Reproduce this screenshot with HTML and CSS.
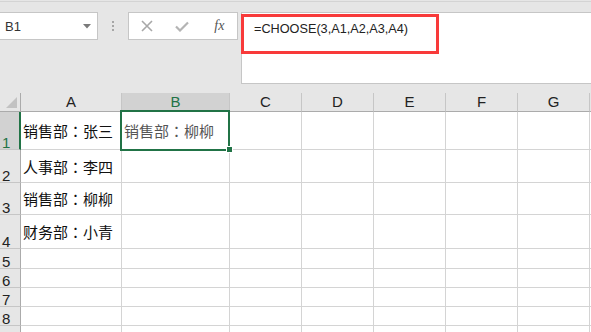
FILE: index.html
```html
<!DOCTYPE html>
<html lang="zh">
<head>
    <meta charset="UTF-8">
    <title>CHOOSE</title>
    <link rel="stylesheet" href="styles.css">
</head>
<body>

    <!-- 名称框 + 编辑栏 -->
    <div class="toolbar">
        <div class="name-box">
            <span>B1</span>
            <svg width="8" height="5" viewBox="0 0 8 5"><path d="M0 0H8L4 4.5Z" fill="#7a7a7a"/></svg>
        </div>
        <div class="grip"><i></i><i></i><i></i></div>
        <div class="fx-buttons">
            <span class="fx-btn">
                <svg width="12" height="12" viewBox="0 0 12 12"><path d="M1 1L11 11M11 1L1 11" stroke="#a8a8a8" stroke-width="1.6" fill="none"/></svg>
            </span>
            <span class="fx-btn">
                <svg width="14" height="11" viewBox="0 0 14 11"><path d="M1 5.5L5 9.5L13 1.5" stroke="#b4b4b4" stroke-width="2.2" fill="none"/></svg>
            </span>
            <span class="fx-btn fx-label">fx</span>
        </div>
        <div class="formula-bar">
            <div class="highlight"></div>
            <span class="formula">=CHOOSE(3,A1,A2,A3,A4)</span>
        </div>
    </div>

    <!-- 工作表 -->
    <div class="sheet">
        <div class="corner"><svg width="11" height="11" viewBox="0 0 11 11"><path d="M11 0V11H0Z" fill="#c2c2c2"/></svg></div>
        <div class="col-head">A</div>
        <div class="col-head active">B</div>
        <div class="col-head">C</div>
        <div class="col-head">D</div>
        <div class="col-head">E</div>
        <div class="col-head">F</div>
        <div class="col-head">G</div>
        <div class="col-head"></div>

        <div class="row-head active">1</div>
        <div class="cell">销售部<span class="colon">：</span>张三</div>
        <div class="cell selected">销售部<span class="colon">：</span>柳柳<span class="sel-box"></span><span class="fill-handle"></span></div>
        <div class="cell"></div><div class="cell"></div><div class="cell"></div><div class="cell"></div><div class="cell"></div><div class="cell"></div>

        <div class="row-head">2</div>
        <div class="cell">人事部<span class="colon">：</span>李四</div>
        <div class="cell"></div><div class="cell"></div><div class="cell"></div><div class="cell"></div><div class="cell"></div><div class="cell"></div><div class="cell"></div>

        <div class="row-head">3</div>
        <div class="cell">销售部<span class="colon">：</span>柳柳</div>
        <div class="cell"></div><div class="cell"></div><div class="cell"></div><div class="cell"></div><div class="cell"></div><div class="cell"></div><div class="cell"></div>

        <div class="row-head">4</div>
        <div class="cell">财务部<span class="colon">：</span>小青</div>
        <div class="cell"></div><div class="cell"></div><div class="cell"></div><div class="cell"></div><div class="cell"></div><div class="cell"></div><div class="cell"></div>

        <div class="row-head">5</div>
        <div class="cell"></div><div class="cell"></div><div class="cell"></div><div class="cell"></div><div class="cell"></div><div class="cell"></div><div class="cell"></div><div class="cell"></div>

        <div class="row-head">6</div>
        <div class="cell"></div><div class="cell"></div><div class="cell"></div><div class="cell"></div><div class="cell"></div><div class="cell"></div><div class="cell"></div><div class="cell"></div>

        <div class="row-head">7</div>
        <div class="cell"></div><div class="cell"></div><div class="cell"></div><div class="cell"></div><div class="cell"></div><div class="cell"></div><div class="cell"></div><div class="cell"></div>

        <div class="row-head">8</div>
        <div class="cell"></div><div class="cell"></div><div class="cell"></div><div class="cell"></div><div class="cell"></div><div class="cell"></div><div class="cell"></div><div class="cell"></div>

        <div class="row-head">9</div>
        <div class="cell"></div><div class="cell"></div><div class="cell"></div><div class="cell"></div><div class="cell"></div><div class="cell"></div><div class="cell"></div><div class="cell"></div>
    </div>

</body>
</html>
```

FILE: styles.css
```css
/* 页面基础 */
body {
    margin: 0;
    background-color: #e6e6e6;
    font-family: "Liberation Sans", "Noto Sans CJK SC", sans-serif;
    overflow: hidden;
}

/* 顶部编辑栏 */
.toolbar {
    margin-top: 1px;
    border-top: 1px solid #d4d4d4;
    height: 92px;
    box-sizing: border-box;
    padding-top: 10px;
    display: flex;
    align-items: flex-start;
}

.name-box {
    margin-left: -1px;
    width: 99px;
    height: 28px;
    box-sizing: border-box;
    background: #fff;
    border: 1px solid #c6c6c6;
    display: flex;
    align-items: center;
    justify-content: space-between;
    padding: 0 6px 0 5px;
    font-size: 13px;
    color: #333;
}

.grip {
    width: 30px;
    height: 28px;
    display: flex;
    flex-direction: column;
    align-items: center;
    justify-content: center;
    gap: 2px;
}

.grip i {
    display: block;
    width: 2px;
    height: 2px;
    background: #a6a6a6;
}

.fx-buttons {
    width: 110px;
    height: 28px;
    box-sizing: border-box;
    background: #fff;
    border: 1px solid #c6c6c6;
    display: flex;
}

.fx-btn {
    width: 36px;
    display: flex;
    align-items: center;
    justify-content: center;
}

.fx-label {
    font-family: "Liberation Serif", serif;
    font-style: italic;
    font-size: 14px;
    color: #555;
    padding-left: 2px;
}

.formula-bar {
    position: relative;
    flex: 1;
    margin-left: 3px;
    margin-right: -1px;
    height: 72px;
    box-sizing: border-box;
    background: #fff;
    border: 1px solid #c6c6c6;
    padding: 6px 0 0 12px;
}

.formula {
    font-size: 12.7px;
    line-height: 16px;
    color: #222;
}

/* 红色标注框 */
.highlight {
    position: absolute;
    left: -1px;
    top: 1px;
    width: 198px;
    height: 40px;
    box-sizing: border-box;
    border: 3px solid #f83a3a;
}

/* 工作表网格 */
.sheet {
    display: grid;
    grid-template-columns: 21px 101px 108px repeat(5, 72px) 1fr;
    grid-template-rows: 19px 38px 33px 32px 34px 20px 19px 19px 19px 19px;
    background: #fff;
}

.sheet > div {
    box-sizing: border-box;
}

.corner {
    background: #e6e6e6;
    border-right: 1px solid #ababab;
    border-bottom: 1px solid #ababab;
    display: flex;
    align-items: flex-end;
    justify-content: flex-end;
    padding: 0 3px 3px 0;
}

.col-head {
    background: #e6e6e6;
    border-right: 1px solid #c6c6c6;
    border-bottom: 1px solid #ababab;
    font-size: 15px;
    line-height: 18px;
    text-align: center;
    color: #222;
}

.col-head.active {
    background: #d2d2d2;
    color: #217346;
    border-bottom-color: #217346;
}

.row-head {
    background: #e6e6e6;
    border-right: 1px solid #ababab;
    border-bottom: 1px solid #c6c6c6;
    font-size: 15px;
    line-height: 12px;
    display: flex;
    align-items: flex-end;
    padding-left: 2px;
    color: #222;
}

.row-head.active {
    background: #d2d2d2;
    color: #217346;
    border-right: 2px solid #217346;
}

.cell {
    border-right: 1px solid #d4d4d4;
    border-bottom: 1px solid #d4d4d4;
    display: flex;
    align-items: center;
    padding-left: 2px;
    font-size: 15px;
    color: #111;
    white-space: nowrap;
}

/* 全角冒号：用居中字形 */
.colon {
    font-family: "Noto Sans CJK JP", sans-serif;
    font-feature-settings: "locl" 0;
}

.cell.selected {
    position: relative;
    color: #555;
}

.sel-box {
    position: absolute;
    left: -2px;
    top: -2px;
    width: 110px;
    height: 41px;
    box-sizing: border-box;
    border: 2px solid #217346;
}

.fill-handle {
    position: absolute;
    left: 104px;
    top: 34px;
    width: 5px;
    height: 5px;
    background: #217346;
    border: 1px solid #fff;
}
```
